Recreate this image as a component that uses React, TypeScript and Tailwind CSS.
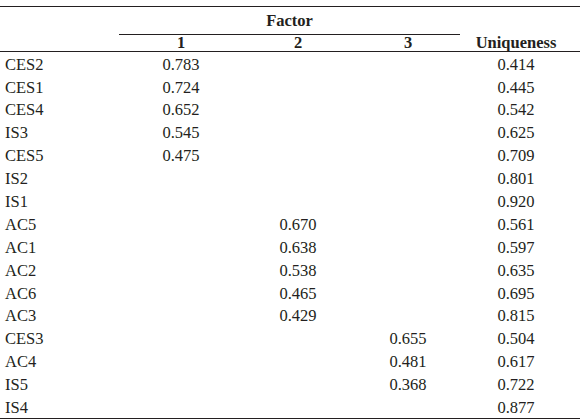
const ROWS: [string, string, string, string, string][] = [
  ["CES2", "0.783", "", "", "0.414"],
  ["CES1", "0.724", "", "", "0.445"],
  ["CES4", "0.652", "", "", "0.542"],
  ["IS3", "0.545", "", "", "0.625"],
  ["CES5", "0.475", "", "", "0.709"],
  ["IS2", "", "", "", "0.801"],
  ["IS1", "", "", "", "0.920"],
  ["AC5", "", "0.670", "", "0.561"],
  ["AC1", "", "0.638", "", "0.597"],
  ["AC2", "", "0.538", "", "0.635"],
  ["AC6", "", "0.465", "", "0.695"],
  ["AC3", "", "0.429", "", "0.815"],
  ["CES3", "", "", "0.655", "0.504"],
  ["AC4", "", "", "0.481", "0.617"],
  ["IS5", "", "", "0.368", "0.722"],
  ["IS4", "", "", "", "0.877"],
];

const GRID = "grid grid-cols-[120px_122px_112px_114px_112px]";

export default function App() {
  return (
    <div className="w-[580px] h-[420px] bg-white pt-[6px] text-[#231f20] text-[16.5px] font-['Liberation_Serif',serif]">
      <div className="border-t border-[#231f20]">
        {/* header row 1 */}
        <div className={`${GRID} h-[22px] items-end`}>
          <div />
          <div className="col-span-3 mr-[8px] -ml-[1px] h-full pt-[2px] border-b border-[#231f20] flex items-center justify-center font-bold">
            Factor
          </div>
          <div />
        </div>
        {/* header row 2 */}
        <div className={`${GRID} h-[23px] pt-[2px] items-center font-bold border-b border-[#231f20]`}>
          <div />
          <div className="text-center">1</div>
          <div className="text-center">2</div>
          <div className="text-center -ml-[6px]">3</div>
          <div className="text-center pr-[16px]">Uniqueness</div>
        </div>
        {/* body */}
        <div className="border-b border-[#231f20]">
          {ROWS.map((r) => (
            <div key={r[0]} className={`${GRID} h-[22.9px] pt-[3px] items-center leading-none`}>
              <div className="pl-[5px]">{r[0]}</div>
              <div className="text-center">{r[1]}</div>
              <div className="text-center">{r[2]}</div>
              <div className="text-center -ml-[6px]">{r[3]}</div>
              <div className="text-center pr-[16px]">{r[4]}</div>
            </div>
          ))}
        </div>
      </div>
    </div>
  );
}
